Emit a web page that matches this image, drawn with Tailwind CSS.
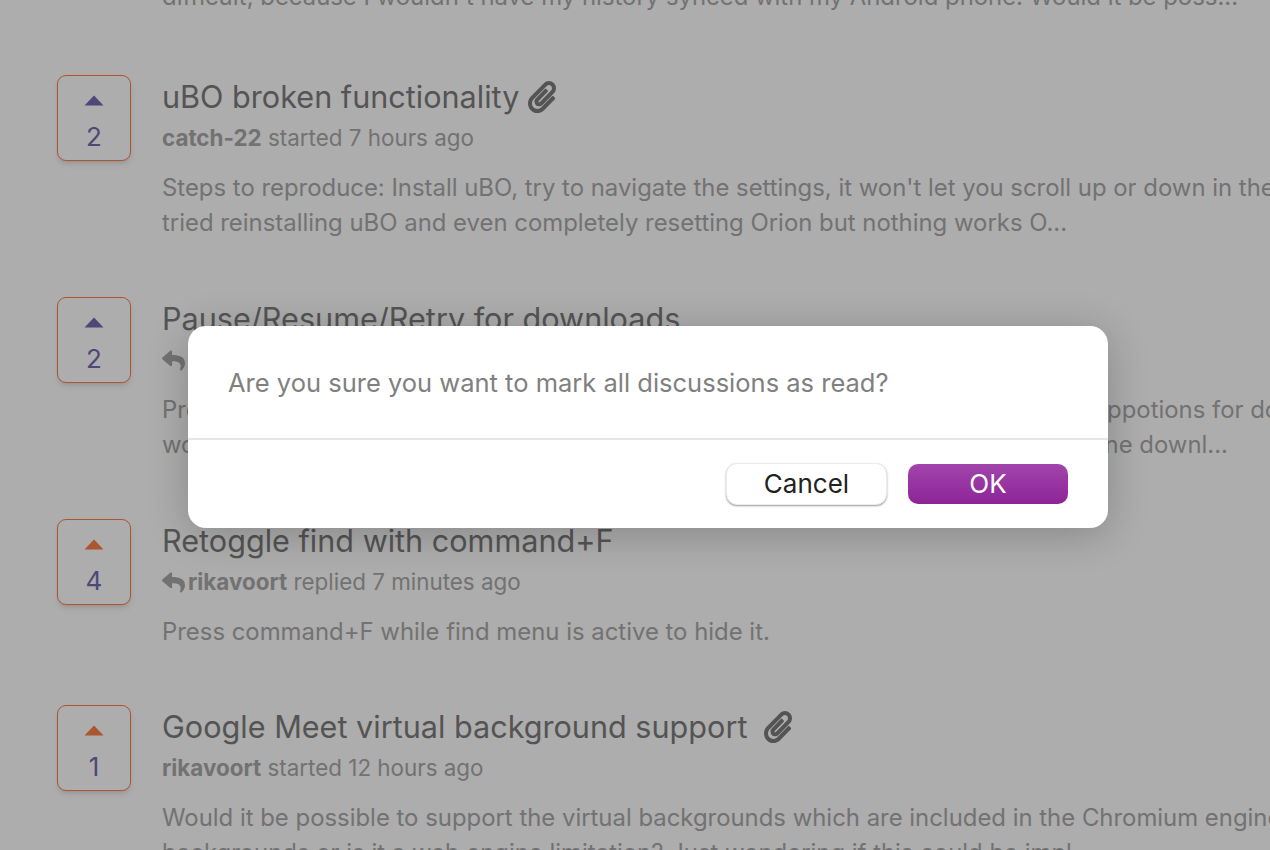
<!doctype html>
<html>

<head>
	<meta charset="UTF-8">
	<meta name="viewport" content="width=device-width, initial-scale=1.0">
	<script src="https://cdn.jsdelivr.net/npm/@tailwindcss/browser@4"></script>
</head>

<body class="bg-white font-['Inter',sans-serif]">
	<div class="relative h-[850px] w-[1270px] overflow-hidden">
		<!--discussion list-->
		<div class="flex flex-col -mt-[21px] pl-[57px] whitespace-nowrap">
			<!--row cut off by the top of the window-->
			<div class="pl-[105px] h-[96px] text-[23.9px] leading-[35px] text-[#a9a9a9]">
				difficult, because I wouldn't have my history synced with my Android phone. Would it be poss...
			</div>

			<div class="flex gap-[31px] h-[222px]">
				<div class="flex flex-col shrink-0 items-center w-[74px] h-[86px] rounded-[9px] border border-[#fc7f47] shadow-md bg-white">
					<svg class="mt-[19px]" width="20" height="11" viewBox="0 0 20 11"><path d="M10 0.5 L19.5 10.5 H0.5 Z" fill="#7569b0"/></svg>
					<span class="mt-[13px] text-[26px] leading-[36px] text-[#7569b0]">2</span>
				</div>
				<div>
					<div class="flex items-center h-[44px] text-[30.6px] leading-[44px] text-[#7d7d7d]">uBO broken functionality
						<svg class="ml-[9px] -mt-[1px]" width="28" height="32" viewBox="0 0 448 512"><path fill="#7d7d7d" d="M43.246 466.142c-58.43-60.289-57.341-157.511 1.386-217.581L254.392 34c44.316-45.332 116.351-45.336 160.671 0 43.89 44.894 43.943 117.329 0 162.276L232.214 383.128c-29.855 30.537-78.633 30.111-107.982-.998-28.275-29.97-27.368-77.473 1.452-106.953l143.743-146.835c6.182-6.314 16.312-6.422 22.626-.241l22.861 22.379c6.315 6.182 6.422 16.312.241 22.626L171.427 319.927c-4.932 5.045-5.236 13.428-.648 18.292 4.372 4.634 11.245 4.711 15.688.165l182.849-186.851c19.613-20.062 19.613-52.725-.011-72.798-19.189-19.627-49.957-19.637-69.154 0L90.39 293.295c-34.763 35.56-35.299 93.12-1.191 128.313 34.01 35.093 88.985 35.137 123.058.286l172.06-175.999c6.177-6.319 16.307-6.433 22.626-.256l22.877 22.364c6.319 6.177 6.434 16.307.256 22.626l-172.06 175.998c-59.576 60.938-155.943 60.216-214.77-.485z"/></svg>
					</div>
					<div class="text-[22.4px] leading-[38px] text-[#a9a9a9]"><b class="font-bold">catch-22</b> started 7 hours ago</div>
					<div class="mt-[13px] text-[23.9px] leading-[36px] text-[#a9a9a9]">
						<p>Steps to reproduce: Install uBO, try to navigate the settings, it won't let you scroll up or down in the</p>
						<p class="-mt-[1px]">tried reinstalling uBO and even completely resetting Orion but nothing works O...</p>
					</div>
				</div>
			</div>

			<div class="flex gap-[31px] h-[222px]">
				<div class="flex flex-col shrink-0 items-center w-[74px] h-[86px] rounded-[9px] border border-[#fc7f47] shadow-md bg-white">
					<svg class="mt-[19px]" width="20" height="11" viewBox="0 0 20 11"><path d="M10 0.5 L19.5 10.5 H0.5 Z" fill="#7569b0"/></svg>
					<span class="mt-[13px] text-[26px] leading-[36px] text-[#7569b0]">2</span>
				</div>
				<div>
					<div class="h-[44px] text-[30.6px] leading-[44px] text-[#7d7d7d]">Pause/Resume/Retry for downloads</div>
					<div class="flex items-center text-[22.4px] leading-[38px] text-[#a9a9a9]">
						<svg class="mr-[3px]" width="23" height="23" viewBox="0 0 512 512"><path fill="#a9a9a9" d="M8.309 189.836L184.313 37.851C199.719 24.546 224 35.347 224 56.015v80.053c160.629 1.839 288 34.032 288 186.258 0 61.441-39.581 122.309-83.333 154.132-13.653 9.931-33.111-2.533-28.077-18.631 45.344-145.012-21.507-183.51-176.59-185.742V360c0 20.7-24.3 31.453-39.687 18.164l-176.004-152c-11.071-9.562-11.086-26.753 0-36.328z"/></svg>
						<b class="font-bold">rikavoort</b>&nbsp;replied 1 hour ago
					</div>
					<div class="mt-[13px] text-[23.9px] leading-[36px] text-[#a9a9a9]">
						<p>Pressing a download link starts it at once, and in the browser settings there are no oppotions for downloads</p>
						<p class="-mt-[1px]">would be helpful to pause, resume, or retry them when a connection drops during one downl...</p>
					</div>
				</div>
			</div>

			<div class="flex gap-[31px] h-[186px]">
				<div class="flex flex-col shrink-0 items-center w-[74px] h-[86px] rounded-[9px] border border-[#fc7f47] shadow-md bg-white">
					<svg class="mt-[19px]" width="20" height="11" viewBox="0 0 20 11"><path d="M10 0.5 L19.5 10.5 H0.5 Z" fill="#fc7f47"/></svg>
					<span class="mt-[13px] text-[26px] leading-[36px] text-[#7569b0]">4</span>
				</div>
				<div>
					<div class="h-[44px] text-[30.6px] leading-[44px] text-[#7d7d7d]">Retoggle find with command+F</div>
					<div class="flex items-center text-[22.4px] leading-[38px] text-[#a9a9a9]">
						<svg class="mr-[3px]" width="23" height="23" viewBox="0 0 512 512"><path fill="#a9a9a9" d="M8.309 189.836L184.313 37.851C199.719 24.546 224 35.347 224 56.015v80.053c160.629 1.839 288 34.032 288 186.258 0 61.441-39.581 122.309-83.333 154.132-13.653 9.931-33.111-2.533-28.077-18.631 45.344-145.012-21.507-183.51-176.59-185.742V360c0 20.7-24.3 31.453-39.687 18.164l-176.004-152c-11.071-9.562-11.086-26.753 0-36.328z"/></svg>
						<b class="font-bold">rikavoort</b>&nbsp;replied 7 minutes ago
					</div>
					<div class="mt-[13px] text-[23.9px] leading-[36px] text-[#a9a9a9]">
						<p>Press command+F while find menu is active to hide it.</p>
					</div>
				</div>
			</div>

			<div class="flex gap-[31px] h-[222px]">
				<div class="flex flex-col shrink-0 items-center w-[74px] h-[86px] rounded-[9px] border border-[#fc7f47] shadow-md bg-white">
					<svg class="mt-[19px]" width="20" height="11" viewBox="0 0 20 11"><path d="M10 0.5 L19.5 10.5 H0.5 Z" fill="#fc7f47"/></svg>
					<span class="mt-[13px] text-[26px] leading-[36px] text-[#7569b0]">1</span>
				</div>
				<div>
					<div class="flex items-center h-[44px] text-[30.6px] leading-[44px] text-[#7d7d7d]">Google Meet virtual background support
						<svg class="ml-[17px] -mt-[1px]" width="28" height="32" viewBox="0 0 448 512"><path fill="#7d7d7d" d="M43.246 466.142c-58.43-60.289-57.341-157.511 1.386-217.581L254.392 34c44.316-45.332 116.351-45.336 160.671 0 43.89 44.894 43.943 117.329 0 162.276L232.214 383.128c-29.855 30.537-78.633 30.111-107.982-.998-28.275-29.97-27.368-77.473 1.452-106.953l143.743-146.835c6.182-6.314 16.312-6.422 22.626-.241l22.861 22.379c6.315 6.182 6.422 16.312.241 22.626L171.427 319.927c-4.932 5.045-5.236 13.428-.648 18.292 4.372 4.634 11.245 4.711 15.688.165l182.849-186.851c19.613-20.062 19.613-52.725-.011-72.798-19.189-19.627-49.957-19.637-69.154 0L90.39 293.295c-34.763 35.56-35.299 93.12-1.191 128.313 34.01 35.093 88.985 35.137 123.058.286l172.06-175.999c6.177-6.319 16.307-6.433 22.626-.256l22.877 22.364c6.319 6.177 6.434 16.307.256 22.626l-172.06 175.998c-59.576 60.938-155.943 60.216-214.77-.485z"/></svg>
					</div>
					<div class="text-[22.4px] leading-[38px] text-[#a9a9a9]"><b class="font-bold">rikavoort</b> started 12 hours ago</div>
					<div class="mt-[13px] text-[23.9px] leading-[36px] text-[#a9a9a9]">
						<p>Would it be possible to support the virtual backgrounds which are included in the Chromium engine</p>
						<p class="-mt-[1px]">backgrounds or is it a web engine limitation? Just wondering if this could be impl...</p>
					</div>
				</div>
			</div>
		</div>

		<!--dimmed backdrop over the whole page-->
		<div class="absolute inset-0 bg-black/[0.32]"></div>

		<!--confirm dialog-->
		<div class="absolute left-[188px] top-[326px] w-[920px] h-[202px] rounded-[18px] bg-white shadow-[0_6px_40px_rgba(0,0,0,0.22)]">
			<div class="h-[114px] pl-[40px] pt-[39px] border-b-2 border-[#e6e6e6] text-[25.5px] leading-[36px] text-[#808080]">
				Are you sure you want to mark all discussions as read?
			</div>
			<div class="flex justify-end items-center gap-[21px] pr-[40px] pt-[23px]">
				<button class="w-[161px] h-[42px] rounded-[11px] bg-white border border-[#ececec] shadow-[0_1px_2px_rgba(0,0,0,0.4)] text-[26px] leading-none text-[#222222]">Cancel</button>
				<button class="w-[160px] h-[40px] rounded-[10px] bg-linear-to-b from-[#a244ab] to-[#8e2397] text-[26px] leading-none text-white">OK</button>
			</div>
		</div>
	</div>
</body>
</html>
